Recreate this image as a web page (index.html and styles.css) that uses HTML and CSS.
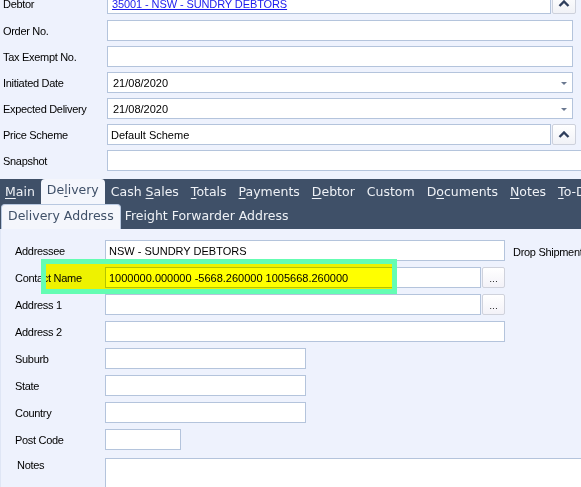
FILE: index.html
```html
<!DOCTYPE html>
<html>
<head>
<meta charset="utf-8">
<link rel="stylesheet" href="styles.css">
</head>
<body>
<div class="header">
  <div class="row first">
    <span class="lbl">Debtor</span>
    <div class="field short"><a class="link" href="#">35001 - NSW - SUNDRY DEBTORS</a></div>
    <button class="btn-up"><svg width="12" height="7" viewBox="0 0 12 7"><path d="M1.5 6 L6 1.5 L10.5 6" fill="none" stroke="#2f3e5c" stroke-width="2.4"/></svg></button>
  </div>
  <div class="row">
    <span class="lbl">Order No.</span>
    <div class="field long"></div>
  </div>
  <div class="row">
    <span class="lbl">Tax Exempt No.</span>
    <div class="field long"></div>
  </div>
  <div class="row">
    <span class="lbl">Initiated Date</span>
    <div class="field long combo"><span class="val date">21/08/2020</span><span class="arrow"></span></div>
  </div>
  <div class="row">
    <span class="lbl">Expected Delivery</span>
    <div class="field long combo"><span class="val date">21/08/2020</span><span class="arrow"></span></div>
  </div>
  <div class="row">
    <span class="lbl">Price Scheme</span>
    <div class="field short"><span class="val">Default Scheme</span></div>
    <button class="btn-up"><svg width="12" height="7" viewBox="0 0 12 7"><path d="M1.5 6 L6 1.5 L10.5 6" fill="none" stroke="#2f3e5c" stroke-width="2.4"/></svg></button>
  </div>
  <div class="row">
    <span class="lbl">Snapshot</span>
    <div class="field wide"></div>
  </div>
</div>

<div class="tabs">
  <div class="maintabs">
    <span class="tab"><u>M</u>ain</span>
    <span class="tab active">De<u>l</u>ivery</span>
    <span class="tab">Cash <u>S</u>ales</span>
    <span class="tab"><u>T</u>otals</span>
    <span class="tab"><u>P</u>ayments</span>
    <span class="tab"><u>D</u>ebtor</span>
    <span class="tab">Custom</span>
    <span class="tab">D<u>o</u>cuments</span>
    <span class="tab"><u>N</u>otes</span>
    <span class="tab"><u>T</u>o-Do</span>
  </div>
  <div class="subtabs">
    <span class="subtab active">Delivery Address</span>
    <span class="subtab">Freight Forwarder Address</span>
  </div>
</div>

<div class="content">
  <div class="drow">
    <span class="dlbl">Addressee</span>
    <div class="field w400"><span class="val">NSW - SUNDRY DEBTORS</span></div>
    <span class="side">Drop Shipment</span>
  </div>
  <div class="drow">
    <span class="dlbl">Contact Name</span>
    <div class="field w376"><span class="val">1000000.000000 -5668.260000 1005668.260000</span></div>
    <button class="btn-dots">...</button>
  </div>
  <div class="drow">
    <span class="dlbl">Address 1</span>
    <div class="field w376"></div>
    <button class="btn-dots">...</button>
  </div>
  <div class="drow">
    <span class="dlbl">Address 2</span>
    <div class="field w400"></div>
  </div>
  <div class="drow">
    <span class="dlbl">Suburb</span>
    <div class="field w201"></div>
  </div>
  <div class="drow">
    <span class="dlbl">State</span>
    <div class="field w201"></div>
  </div>
  <div class="drow">
    <span class="dlbl">Country</span>
    <div class="field w201"></div>
  </div>
  <div class="drow">
    <span class="dlbl">Post Code</span>
    <div class="field w76"></div>
  </div>
  <div class="drow notes">
    <span class="dlbl notes-lbl">Notes</span>
    <div class="field memo"></div>
  </div>

  <div class="highlight"><div class="hl-fill"></div></div>
</div>
</body>
</html>
```

FILE: styles.css
```css
html, body {
  margin: 0;
  padding: 0;
}
body {
  width: 581px;
  height: 487px;
  overflow: hidden;
  background: #eef2fd;
  font-family: "Liberation Sans", Arial, sans-serif;
  font-size: 11px;
  color: #000;
}

.header {
  display: flex;
  flex-direction: column;
  gap: 5px;
  padding-left: 3px;
  margin-top: -7px;
  margin-bottom: 8px;
}
.row {
  display: flex;
  align-items: center;
  height: 21px;
}
.row.first {
  margin-bottom: 1px;
}
.lbl {
  width: 104px;
  flex: none;
  white-space: nowrap;
  letter-spacing: -0.3px;
}

.field {
  box-sizing: border-box;
  height: 21px;
  background: #fff;
  border: 1px solid #b4c4dc;
  display: flex;
  align-items: center;
  padding-left: 3px;
  flex: none;
  white-space: nowrap;
  overflow: hidden;
}
.field.short { width: 444px; }
.field.long { width: 466px; }
.field.wide { width: 490px; }
.field.combo { justify-content: space-between; padding-right: 5px; }
.val.date { padding-left: 2px; }

.link {
  color: #1a1aee;
  text-decoration: underline;
  padding-left: 1px;
  letter-spacing: -0.1px;
}

.arrow {
  width: 0;
  height: 0;
  border-left: 3px solid transparent;
  border-right: 3px solid transparent;
  border-top: 3px solid #6a7890;
  margin-top: 1px;
}

.btn-up {
  box-sizing: border-box;
  width: 24px;
  height: 21px;
  margin-left: 1px;
  padding: 0;
  border: 1px solid #cdd1dc;
  border-radius: 2px;
  background: linear-gradient(#ffffff, #f1f2f7);
  display: flex;
  align-items: center;
  justify-content: center;
  flex: none;
}

.tabs {
  background: #3f5068;
  height: 50px;
  display: flex;
  flex-direction: column;
}
.maintabs {
  display: flex;
  height: 25px;
  margin-left: -1px;
  font-family: "DejaVu Sans", Verdana, sans-serif;
  font-size: 12.5px;
}
.tab {
  padding: 0 6px;
  color: #eef1f6;
  line-height: 25px;
  white-space: nowrap;
}
.tab u {
  text-decoration-thickness: 1px;
  text-underline-offset: 2px;
}
.tab.active {
  background: #f4f6fc;
  color: #3f5068;
  border-radius: 4px 4px 0 0;
  line-height: 22px;
}
.subtabs {
  display: flex;
  height: 25px;
  font-family: "DejaVu Sans", Verdana, sans-serif;
  font-size: 12.5px;
}
.subtab {
  padding: 0 4px;
  color: #eef1f6;
  line-height: 24px;
  white-space: nowrap;
}
.subtab.active {
  box-sizing: border-box;
  margin-left: 1px;
  padding: 0 6px;
  background: #f4f6fc;
  color: #3f5068;
  border: 1px solid #b8c8e0;
  border-bottom: none;
  border-radius: 4px 4px 0 0;
  line-height: 21px;
  height: 25px;
}

.content {
  position: relative;
  padding-top: 11px;
  display: flex;
  flex-direction: column;
  gap: 6px;
  border-left: 1px solid #dfe6f5;
  height: 260px;
}
.drow {
  display: flex;
  align-items: center;
  height: 21px;
  padding-left: 14px;
}
.dlbl {
  width: 90px;
  flex: none;
  white-space: nowrap;
  letter-spacing: -0.3px;
}
.field.w400 { width: 400px; }
.field.w376 { width: 376px; }
.field.w201 { width: 201px; }
.field.w76 { width: 76px; }

.side {
  margin-left: 8px;
  margin-top: 3px;
  white-space: nowrap;
  letter-spacing: -0.3px;
}

.btn-dots {
  box-sizing: border-box;
  width: 23px;
  height: 21px;
  margin-left: 1px;
  padding: 0 0 3px 0;
  border: 1px solid #cfd2dc;
  border-radius: 2px;
  background: linear-gradient(#ffffff, #f3f2f8);
  font-family: "DejaVu Sans", sans-serif;
  font-size: 9px;
  color: #222;
  display: flex;
  align-items: flex-end;
  justify-content: center;
  flex: none;
}

.drow.notes {
  align-items: flex-start;
  margin-top: 2px;
  height: 40px;
}
.notes-lbl {
  padding-left: 2px;
  width: 88px;
  line-height: 14px;
}
.field.memo {
  width: 480px;
  height: 40px;
}

.highlight {
  position: absolute;
  left: 40px;
  top: 30px;
  width: 356px;
  height: 35px;
  box-sizing: border-box;
  border: 5px solid #64fdb3;
}
.hl-fill {
  width: 100%;
  height: 100%;
  background: #ffff00;
  mix-blend-mode: multiply;
}
```
